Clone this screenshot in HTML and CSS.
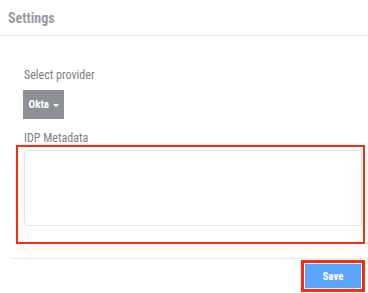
FILE: index.html
```html
<!DOCTYPE html>
<html lang="en">
<head>
    <meta charset="UTF-8">
    <meta name="viewport" content="width=device-width, initial-scale=1.0">
    <title>Settings</title>
    <link rel="stylesheet" href="styles.css">
</head>
<body>
    <div class="panel">
        <div class="panel-header">Settings</div>
        <div class="panel-body">
            <label class="field-label">Select provider</label>
            <button class="provider-btn">Okta <span class="caret"></span></button>
            <label class="field-label idp-label">IDP Metadata</label>
            <div class="highlight metadata-box">
                <textarea class="metadata-input"></textarea>
            </div>
        </div>
        <div class="panel-footer">
            <span class="highlight save-wrap">
                <button class="save-btn">Save</button>
            </span>
        </div>
    </div>
</body>
</html>
```

FILE: styles.css
```css
body {
    margin: 0;
    padding: 0;
    background: #fff;
    font-family: "Roboto Condensed", "Liberation Sans Narrow", "DejaVu Sans Condensed", Roboto, sans-serif;
    overflow: hidden;
}

.panel {
    width: 368px;
}

.panel-header {
    height: 36px;
    box-sizing: border-box;
    padding: 10px 8px 0;
    font-size: 14px;
    line-height: 16px;
    font-weight: bold;
    color: #9a9b9f;
    border-bottom: 1px solid #ececec;
}

.panel-body {
    padding: 32px 0 0 16px;
}

.field-label {
    display: block;
    margin-left: 8px;
    font-size: 12px;
    line-height: 14px;
    color: #7d7e82;
}

.provider-btn {
    display: block;
    margin: 8px 0 0 7px;
    width: 41px;
    height: 29px;
    padding: 0;
    border: none;
    border-radius: 0;
    background: #8e9097;
    color: #fff;
    font-family: inherit;
    font-size: 11px;
    font-weight: bold;
}

.caret {
    display: inline-block;
    width: 0;
    height: 0;
    margin-left: 1px;
    vertical-align: middle;
    border-top: 3px solid #fff;
    border-left: 3px solid transparent;
    border-right: 3px solid transparent;
}

.idp-label {
    margin-top: 12px;
    margin-bottom: 0;
}

.highlight {
    border: 2px solid #ff2a0c;
}

.metadata-box {
    width: 338px;
    padding: 3px 1px 16px 6px;
}

.metadata-input {
    display: block;
    width: 338px;
    height: 76px;
    box-sizing: border-box;
    margin: 0;
    border: 1px solid #e0e3e6;
    border-radius: 3px;
    resize: none;
    background: #fff;
}

.panel-footer {
    margin: 14px 0 0 11px;
    padding: 1px 3px 0 0;
    border-top: 1px solid #ececec;
    display: flex;
    justify-content: flex-end;
}

.save-wrap {
    border-width: 3px;
    padding: 1px;
    display: flex;
}

.save-btn {
    width: 56px;
    height: 24px;
    padding: 0;
    border: none;
    background: #5ba5ff;
    color: #fff;
    font-family: inherit;
    font-size: 11px;
    font-weight: bold;
}
```
